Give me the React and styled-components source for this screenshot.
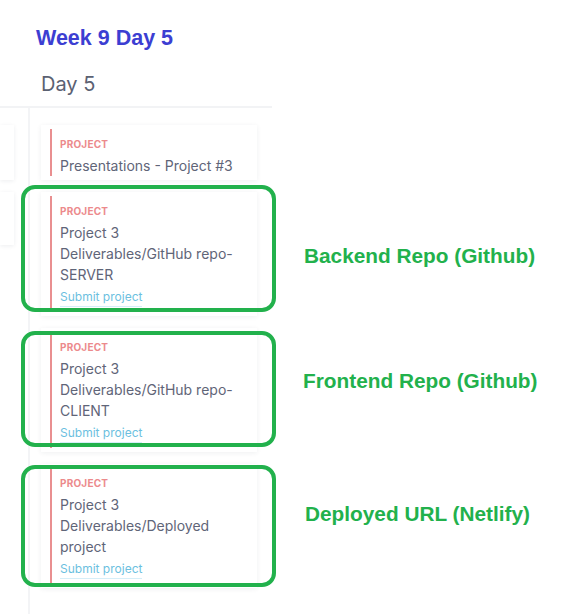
import styled, { createGlobalStyle } from 'styled-components';

const GlobalStyle = createGlobalStyle`
    * { box-sizing: border-box; }
    body {
        margin: 0;
        background: #ffffff;
        font-family: Inter, "Noto Sans", sans-serif;
    }
`;

const cards = [
    { title: ['Presentations - Project #3'], submit: false },
    { title: ['Project 3', 'Deliverables/GitHub repo-', 'SERVER'], submit: true },
    { title: ['Project 3', 'Deliverables/GitHub repo-', 'CLIENT'], submit: true },
    { title: ['Project 3', 'Deliverables/Deployed', 'project'], submit: true },
];

const notes = [
    { text: 'Backend Repo (Github)', box: { top: 185, left: 21, width: 255, height: 127 }, label: { top: 244, left: 304 } },
    { text: 'Frontend Repo (Github)', box: { top: 331, left: 21, width: 255, height: 116 }, label: { top: 369, left: 303 } },
    { text: 'Deployed URL (Netlify)', box: { top: 465, left: 21, width: 255, height: 122 }, label: { top: 502, left: 305 } },
];

function App() {
    return (
        <>
            <GlobalStyle />
            <Page>
                <WeekTitle>Week 9 Day 5</WeekTitle>
                <DayHeader>
                    <DayTitle>Day 5</DayTitle>
                </DayHeader>
                <Columns>
                    <PrevColumn>
                        <StubCard $height={55} />
                        <StubCard $height={53} />
                    </PrevColumn>
                    <DayColumn>
                        {cards.map((c, i) => (
                            <Card key={i}>
                                <CardBody>
                                    <Kind>Project</Kind>
                                    <Title>
                                        {c.title.map((t, j) => <span key={j}>{t}</span>)}
                                    </Title>
                                    {c.submit && <SubmitLink>Submit project</SubmitLink>}
                                </CardBody>
                            </Card>
                        ))}
                    </DayColumn>
                </Columns>

                {notes.map((n, i) => (
                    <div key={i}>
                        <Highlight style={n.box} />
                        <NoteLabel style={n.label}>{n.text}</NoteLabel>
                    </div>
                ))}
            </Page>
        </>
    )
}

export default App;


const Page = styled.div`
    position: relative;
    width: 578px;
    height: 614px;
    overflow: hidden;
    background: #fff;
`;

const WeekTitle = styled.h1`
    margin: 0;
    padding: 26px 0 0 36px;
    height: 58px;
    font-family: "Liberation Sans", Arial, sans-serif;
    font-weight: 700;
    font-size: 21.5px;
    line-height: 24px;
    color: #3c3ed2;
`;

const DayHeader = styled.div`
    width: 272px;
    height: 50px;
    padding: 14px 0 0 41px;
    border-bottom: 2px solid #f2f3f5;
`;

const DayTitle = styled.h2`
    margin: 0;
    font-weight: 400;
    font-size: 20px;
    line-height: 24px;
    color: #5b6172;
`;

const Columns = styled.div`
    display: flex;
    height: 520px;
`;

const PrevColumn = styled.div`
    width: 30px;
    border-right: 2px solid #f3f4f6;
    padding-top: 17px;
    display: flex;
    flex-direction: column;
    gap: 12px;
`;

const StubCard = styled.div`
    width: 14px;
    height: ${p => p.$height}px;
    background: #fff;
    box-shadow: 0 1px 4px rgba(30, 40, 60, 0.08);
`;

const DayColumn = styled.div`
    width: 242px;
    padding: 17px 0 0 11px;
    display: flex;
    flex-direction: column;
    gap: 12px;
`;

const Card = styled.div`
    width: 216px;
    padding: 4px 0 4px 9px;
    background: #fff;
    box-shadow: 0 1px 5px rgba(30, 40, 60, 0.07);
`;

const CardBody = styled.div`
    border-left: 2px solid #e98f90;
    padding-left: 8px;
    display: flex;
    flex-direction: column;
`;

const Kind = styled.div`
    padding-top: 9px;
    font-size: 10px;
    font-weight: 700;
    line-height: 12px;
    letter-spacing: 0.2px;
    text-transform: uppercase;
    color: #ec8a8c;
`;

const Title = styled.div`
    padding-top: 5px;
    display: flex;
    flex-direction: column;
    font-size: 14px;
    line-height: 21px;
    color: #5f6578;
`;

const SubmitLink = styled.div`
    align-self: flex-start;
    margin-top: 3px;
    margin-bottom: 5px;
    padding-bottom: 1px;
    font-size: 12px;
    line-height: 17px;
    color: #6cbfe0;
    border-bottom: 1px solid #d5eef8;
`;

const Highlight = styled.div`
    position: absolute;
    border: 4px solid #22b14c;
    border-radius: 14px;
    pointer-events: none;
`;

const NoteLabel = styled.div`
    position: absolute;
    font-family: "Liberation Sans", Arial, sans-serif;
    font-weight: 700;
    font-size: 20.8px;
    line-height: 24px;
    color: #22b14c;
    white-space: nowrap;
`;
